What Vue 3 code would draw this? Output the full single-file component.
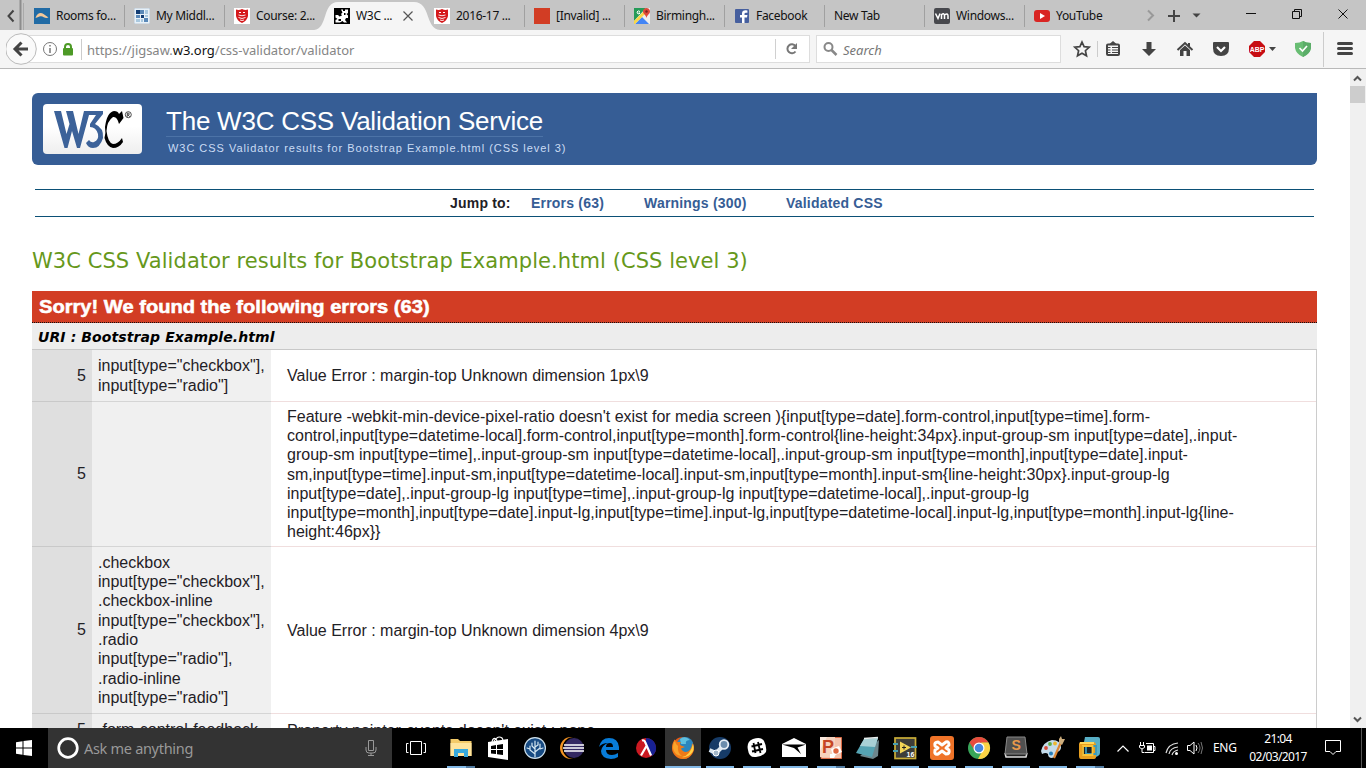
<script setup>
const tabs = [
  { t: 'Rooms fo...', i: 'rooms' }, { t: 'My Middl...', i: 'pixels' }, { t: 'Course: 2...', i: 'shield' },
  { t: 'W3C ...', i: 'w3c', active: true }, { t: '2016-17 ...', i: 'shield' }, { t: '[Invalid] ...', i: 'red' },
  { t: 'Birmingh...', i: 'maps' }, { t: 'Facebook', i: 'fb' }, { t: 'New Tab', i: '' },
  { t: 'Windows...', i: 'vm' }, { t: 'YouTube', i: 'yt' },
]
const rows = [
  { h: 52, sel: ['input[type="checkbox"],', 'input[type="radio"]'], msg: ['Value Error : margin-top Unknown dimension 1px\\9'] },
  { h: 145, sel: [], msg: [
    "Feature -webkit-min-device-pixel-ratio doesn't exist for media screen ){input[type=date].form-control,input[type=time].form-",
    'control,input[type=datetime-local].form-control,input[type=month].form-control{line-height:34px}.input-group-sm input[type=date],.input-',
    'group-sm input[type=time],.input-group-sm input[type=datetime-local],.input-group-sm input[type=month],input[type=date].input-',
    'sm,input[type=time].input-sm,input[type=datetime-local].input-sm,input[type=month].input-sm{line-height:30px}.input-group-lg',
    'input[type=date],.input-group-lg input[type=time],.input-group-lg input[type=datetime-local],.input-group-lg',
    'input[type=month],input[type=date].input-lg,input[type=time].input-lg,input[type=datetime-local].input-lg,input[type=month].input-lg{line-',
    'height:46px}}'] },
  { h: 167, sel: ['.checkbox', 'input[type="checkbox"],', '.checkbox-inline', 'input[type="checkbox"],', '.radio', 'input[type="radio"],', '.radio-inline', 'input[type="radio"]'], msg: ['Value Error : margin-top Unknown dimension 4px\\9'] },
  { h: 33, sel: ['.form-control-feedback'], msg: ["Property pointer-events doesn't exist : none"] },
]
const apps = [
  { i: 'folder', run: 'split' }, { i: 'store' }, { i: 'tree' }, { i: 'eclipse' }, { i: 'edge' }, { i: 'lambda' },
  { i: 'firefox', run: 'full' }, { i: 'steam', run: 'on' }, { i: 'slack', run: 'on' }, { i: 'mail', run: 'on' },
  { i: 'ppt', run: 'split' }, { i: 'note', run: 'on' }, { i: 'labview', run: 'on' }, { i: 'xampp', run: 'on' },
  { i: 'chrome', run: 'on' }, { i: 'sublime', run: 'on' }, { i: 'paint', run: 'on' }, { i: 'vmware', run: 'split' },
]
</script>

<template>
  <div class="screen">
    <header class="tabbar">
      <svg class="prev" width="24" height="30" viewBox="0 0 24 30"><path d="M13.500 10.500L8.500 16L13.500 21.500" fill="none" stroke="#444" stroke-width="2" /><path d="M20.500 0V30" stroke="#8d8d8d" stroke-width="2" /><path d="M23.500 3V30" stroke="#aaa" /></svg>
      <div v-for="(tab, n) in tabs" :key="n" class="tab" :class="{ active: tab.active, bare: !tab.i, sep: n !== 0 && n !== 3 && n !== 4 }">
        <svg v-if="tab.active" class="shape" width="126" height="30" viewBox="0 0 126 30"><path d="M0 30C14 29 8 2 24 2H100C117 2 111 29 126 30Z" fill="#f5f5f5" /></svg>
        <svg v-if="tab.i" class="fav" width="16" height="16" viewBox="0 0 16 16">
          <g v-if="tab.i === 'rooms'"><rect width="16" height="16" fill="#216ba5" /><path d="M1.500 10C3 4.500 7 4 9.500 6L14.500 9.500C11.500 11 9.500 8.500 7 8.200C5 8 4 9.500 1.500 10" fill="#f4c99a" /></g>
          <g v-else-if="tab.i === 'pixels'"><rect width="16" height="16" fill="#e8f1f8" stroke="#9ab" stroke-width=".6" /><path d="M2 2H6V6H2ZM7 7H10V10H7Z" fill="#123d74" /><path d="M6 2H10V6H6ZM2 7H6V10H2ZM10 10H14V14H10Z" fill="#5988b8" /><path d="M11 2H14V6H11ZM2 11H6V14H2ZM7 11H9V14H7ZM11 7H14V9H11Z" fill="#a9c8df" /></g>
          <g v-else-if="tab.i === 'shield'"><rect width="16" height="16" fill="#fff" /><path d="M2 1.500Q5 2.500 8 1Q11 2.500 14 1.500V8Q13 13 8 15Q3 13 2 8Z" fill="#d5191c" /><path d="M4.500 7Q8 8.500 11.500 7M4.500 9.500Q8 11.500 11.500 9.500M6 12Q8 13 10 12" fill="none" stroke="#fff" stroke-width=".9" /><path d="M5 4.500H7M9 4.500H11" stroke="#fff" /></g>
          <g v-else-if="tab.i === 'w3c'"><rect width="16" height="16" /><path d="M7 1.500H9V3H11V1.500H14V5L12.500 6L14 7.500V10H12L11 12L13 14.500H10L8.500 13L6 14.500H1.500V12L3.500 11L1.500 9.500V7H4L5.500 8.500L8 7.500L7 6L8.500 4.500Z" fill="#fff" /><path d="M4.500 11H7V13H4.500ZM10 5H11.500V7H10Z" /></g>
          <rect v-else-if="tab.i === 'red'" width="16" height="16" fill="#d23d24" />
          <g v-else-if="tab.i === 'maps'"><rect width="16" height="16" fill="#eee" /><path d="M0 0H12L0 13Z" fill="#259b58" /><path d="M1 16L8 9L15 16Z" fill="#4385f5" /><path d="M0 13L10 3L12 5L1 16H0Z" fill="#fad749" /><path d="M12.500 10C12 7 9 6 9 3.500C9 1 11 0 12.500 0S16 1 16 3.500C16 6 13 7 12.500 10" fill="#df493a" /><circle cx="12.500" cy="3.500" r="1.200" fill="#7c231e" /><path d="M6 3.500Q4 2 3 4Q3 6 5 6L6 5H4.500" stroke="#fff" fill="none" /></g>
          <g v-else-if="tab.i === 'fb'"><rect x="1" y="1" width="14" height="14" rx="1" fill="#465f9e" /><path d="M10.500 15V9.500H13L13.400 7H10.500V5.700Q10.500 4.700 12 4.700H13.400V2.500Q8 1.700 8 5.500V7H6V9.500H8V15" fill="#fff" /></g>
          <g v-else-if="tab.i === 'vm'"><rect width="16" height="16" rx="2" fill="#47484d" /><path d="M1.500 5.500L4 10.500L6 5.500M7.500 11V6M7.500 6.500Q10.500 4.500 10.500 8V11M10.500 7Q14 4.500 14 8V11" stroke="#fff" stroke-width="1.500" fill="none" /></g>
          <g v-else><rect y="2" width="16" height="12" rx="3" fill="#d92523" /><path d="M6 5L11 8L6 11Z" fill="#fff" /></g>
        </svg>
        <span>{{ tab.t }}</span>
        <svg v-if="tab.active" class="x" width="10" height="10" viewBox="0 0 10 10"><path d="M.5.5L9.500 9.500M9.500.5L.5 9.500" stroke="#555" stroke-width="1.200" /></svg>
      </div>
      <svg class="wincontrols" width="242" height="30" viewBox="1124 0 242 30">
        <path d="M1148 10.500L1153 15.500L1148 20.500" fill="none" stroke="#999" stroke-width="2" />
        <path d="M1174 10V22M1168 16H1180" stroke="#444" stroke-width="2" /><path d="M1192.500 13.500H1200.500L1196.500 17.500Z" fill="#444" />
        <path d="M1246 13.500H1256M1292.500 11.500H1299.500V18.500H1292.500ZM1294.500 11V9.500H1301.500V16.500H1300M1338.500 9.500L1347.500 18.500M1347.500 9.500L1338.500 18.500" fill="none" stroke="#111" />
      </svg>
    </header>

    <nav class="toolbar">
      <div class="address">
        <svg width="74" height="38" viewBox="6 30 74 38">
          <circle cx="21" cy="49" r="15.300" fill="#fafafa" stroke="#bbb" /><path d="M28 49H15.500M21.500 42.500L15 49L21.500 55.500" fill="none" stroke="#444" stroke-width="3" />
          <circle cx="50" cy="49" r="6.500" fill="none" stroke="#777" /><path d="M50 45V46.500M50 48V53" stroke="#777" stroke-width="1.500" />
          <rect x="63" y="48" width="10" height="7.500" rx="1" fill="#4d9a26" /><path d="M65 49V47Q65 44 68 44Q71 44 71 47V49" fill="none" stroke="#4d9a26" stroke-width="2" />
        </svg>
        <span class="url">https://jigsaw.<b>w3.org</b>/css-validator/validator</span>
        <svg class="reload" width="34" height="26" viewBox="775 37 34 26"><path d="M775.500 40V60" stroke="#d0d0d0" /><path d="M795.500 47A4.500 4.500 0 1 0 795.500 52.500" stroke="#777" stroke-width="2" fill="none" /><path d="M797 44V50H791Z" fill="#777" /></svg>
      </div>
      <div class="search">
        <svg width="16" height="16" viewBox="0 0 16 16"><circle cx="5.500" cy="6" r="4" fill="none" stroke="#888" stroke-width="2" /><path d="M8.500 9L13.500 14" stroke="#888" stroke-width="2.500" /></svg>
        <span>Search</span>
      </div>
      <svg class="tools" width="305" height="38" viewBox="1061 30 305 38">
        <path d="M1082 42L1084.100 46.700L1089.200 47.200L1085.400 50.700L1086.500 55.800L1082 53.200L1077.500 55.800L1078.600 50.700L1074.800 47.200L1079.900 46.700Z" fill="none" stroke="#444" stroke-width="1.700" />
        <path d="M1097.500 41V57M1323.500 32V67" stroke="#ccc" />
        <rect x="1107" y="44.500" width="12" height="10.500" rx="1" fill="#f5f5f5" stroke="#444" stroke-width="2" /><path d="M1109.500 44L1113 41L1116.500 44Z" fill="#444" /><path d="M1108 47.500H1110.500M1112 47.500H1118M1108 50H1110.500M1112 50H1118M1108 52.500H1110.500M1112 52.500H1118" stroke="#444" stroke-width="1" />
        <path d="M1146.500 42H1151.500V49H1156L1149 56L1142 49H1146.500Z" fill="#444" />
        <path d="M1177.500 50L1185 43L1192.500 50M1189 43V46" fill="none" stroke="#444" stroke-width="2" /><path d="M1180 50L1185 45.500L1190 50V56H1186.500V51H1183.500V56H1180Z" fill="#444" />
        <path d="M1213 43Q1213 42 1214 42H1228Q1229 42 1229 43V48Q1229 56 1221 56Q1213 56 1213 48Z" fill="#444" /><path d="M1217 47L1221 51L1225 47" fill="none" stroke="#fff" stroke-width="2.200" />
        <path d="M1254 41H1260L1265 46V52L1260 57H1254L1249 52V46Z" fill="#c70d13" /><text x="1249.700" y="52" textLength="14.600" lengthAdjust="spacingAndGlyphs" font-family="Liberation Sans" font-size="8" font-weight="bold" fill="#fff">ABP</text><path d="M1269 47H1276L1272.500 51Z" fill="#444" />
        <path d="M1295 43Q1300 43 1303 41Q1306 43 1311 43V48Q1310 54 1303 57Q1296 54 1295 48Z" fill="#68bd73" /><path d="M1303 41Q1306 43 1311 43V48Q1310 54 1303 57Z" fill="#5bad68" /><path d="M1299.500 48L1302.500 51L1307 46" fill="none" stroke="#fff" stroke-width="1.700" />
        <path d="M1338.500 43.500H1351.500M1338.500 48.500H1351.500M1338.500 53.500H1351.500" stroke="#444" stroke-width="3" stroke-linecap="round" />
      </svg>
    </nav>

    <div class="viewport">
      <main>
        <div class="banner">
          <div class="logo"><svg width="99" height="50" viewBox="0 0 99 50"><path d="M11 7H18L23.500 30L26.500 20L23 7H30L35.500 30L41 7H60V10L52 20Q61 24 60 34Q57 44 50 44Q45 44 43 39L46 36Q48 39 51 38Q56 36 55 30Q53 23 47 23V20L53 11H46L37 44H34L29 27L24.500 44H21.500Z" fill="#3c6299" /><path d="M79 7L80.500 14L76 20Q74 12 70 13Q64 17 63.500 27Q65 39 70 40Q75 40 79 34L80 38Q76 44 70 44Q64 43 61.500 34Q63 29 62 23Q64 8 71 7Q75 7 76 10Z" /><circle cx="85.300" cy="10.700" r="3" fill="none" stroke="#222" stroke-width=".8" /><path d="M84.300 12.700V9.200H85.800Q87.200 10 85.800 10.900H84.800L86.800 12.700" fill="none" stroke="#222" stroke-width=".8" /></svg></div>
          <div class="titles"><h1>The W3C CSS Validation Service</h1><p>W3C CSS Validator results for Bootstrap Example.html (CSS level 3)</p></div>
        </div>
        <div class="jump"><span class="jt">Jump to:</span><span class="je">Errors (63)</span><span class="jw">Warnings (300)</span><span class="jv">Validated CSS</span></div>
        <h2>W3C CSS Validator results for Bootstrap Example.html (CSS level 3)</h2>
        <h3><span>Sorry! We found the following errors (63)</span></h3>
        <h4>URI : Bootstrap Example.html</h4>
        <div class="table">
          <div v-for="(r, n) in rows" :key="n" class="row" :style="{ height: r.h + 'px' }">
            <div class="num">5</div>
            <div class="sel"><div v-for="(s, k) in r.sel" :key="k">{{ s }}</div></div>
            <div class="msg"><div v-for="(m, k) in r.msg" :key="k">{{ m }}</div></div>
          </div>
        </div>
      </main>
      <aside class="scroll"><svg width="16" height="659" viewBox="0 0 16 659"><rect y="17" width="15" height="17" fill="#cdcdcd" /><path d="M4 11.500L7.500 8L11 11.500M4 648.500L7.500 652L11 648.500" fill="none" stroke="#555" stroke-width="2" /></svg></aside>
    </div>

    <footer class="taskbar">
      <div class="start"><svg width="16" height="16" viewBox="0 0 16 16"><path d="M0 2.200L6.500 1.300V7.500H0ZM7.500 1.100L16 0V7.500H7.500ZM0 8.500H6.500V14.700L0 13.800ZM7.500 8.500H16V16L7.500 14.900Z" fill="#fff" /></svg></div>
      <div class="cortana">
        <svg width="22" height="22" viewBox="0 0 22 22"><circle cx="11" cy="11" r="9.300" fill="none" stroke="#fff" stroke-width="2.700" /></svg>
        <span>Ask me anything</span>
        <svg class="mic" width="12" height="16" viewBox="0 0 12 16"><path d="M3.500.5H8.500V10.500H3.500ZM1 7V10Q1 13 4 13H8Q11 13 11 10V7M6 13V15.500M3 15.500H9" fill="none" stroke="#999" /></svg>
      </div>
      <div class="task"><svg width="20" height="16" viewBox="0 0 20 16"><path d="M4.500 1.500H15.500V14.500H4.500ZM2.500 3.500H.5V12.500H2.500M17.500 3.500H19.500V12.500H17.500" fill="none" stroke="#fff" /></svg></div>
      <div class="apps">
        <div v-for="a in apps" :key="a.i" class="app" :class="a.run">
          <svg width="24" height="24" viewBox="0 0 24 24">
            <g v-if="a.i === 'folder'"><path d="M1.500 3H9L11 5H22.500V20H1.500Z" fill="#f3ca68" /><path d="M1.500 7H22.500V20H1.500Z" fill="#ffe49c" /><path d="M5 21V13H19V21H15V17H9V21Z" fill="#38a9dc" /></g>
            <g v-else-if="a.i === 'store'"><path d="M2 6L22 3V24L2 21Z" fill="#fff" /><path d="M6 6Q7 1 10 3L11 5M8 5Q12 -1 16 2L17 4" fill="none" stroke="#fff" stroke-width="1.200" /><path d="M5 10L10 9V13H5ZM11 9L17 8V13H11ZM5 14H10V18L5 17.500ZM11 14H17V19L11 18.200Z" /></g>
            <g v-else-if="a.i === 'tree'"><circle cx="12" cy="12" r="11" fill="#cfe2ee" /><circle cx="12" cy="12" r="9.800" fill="#174b83" /><path d="M12 21V5M12 18L7 14V10M7 13L4 12M12 13L9 10V7M12 16L17 12V8M17 13L20 12M12 11L15 9V6" fill="none" stroke="#d6e9f3" stroke-width="1.200" stroke-linecap="round" /></g>
            <g v-else-if="a.i === 'eclipse'"><circle cx="11" cy="12" r="11" fill="#f59524" /><circle cx="13.500" cy="12" r="11" fill="#000" /><circle cx="14" cy="12" r="10" fill="#332862" /><path d="M4 9H24M3 12H24M4 15H24" stroke="#fff" stroke-width="1.700" /></g>
            <path v-else-if="a.i === 'edge'" d="M2 11Q4 2 12 2Q21 2 22 11V14H9Q9 19 15 19Q18 19 21 17V21Q18 23 14 23Q4 22 4 15Q5 9 11 7Q5 7 2 11M9 11H16Q16 7 13 7Q9 7 9 11" fill="#087cd8" fill-rule="evenodd" />
            <g v-else-if="a.i === 'lambda'"><circle cx="12" cy="12" r="10" fill="#cb1921" /><path d="M12 2A10 10 0 0 1 18 20L12 8Z" fill="#172193" /><path d="M8 4.500Q10.500 3.500 11.500 7L17 19.500M12.500 10L7 19.500" fill="none" stroke="#fff" stroke-width="2.200" /></g>
            <g v-else-if="a.i === 'firefox'"><circle cx="12" cy="12" r="11" fill="#e55b16" /><circle cx="14" cy="9.500" r="8.500" fill="#2a86be" /><path d="M9 3Q14 -1 19 4Q14 4 15 8L10 8Z" fill="#5ec0df" /><path d="M1 12Q1 7 3.500 3.500L6 6L10 6Q8 8 10 9.500L14 11L10 12.500Q12 17 17 15.500Q21 13 21 7Q24 11 22 16Q18 24 11 23Q2 21 1 12" fill="#ee7a18" /><path d="M22 8Q24 14 20 18Q16 22 11 21Q19 20 22 8" fill="#ffd247" /><path d="M2 12Q2 7 4 5L5 8L7 10Q6 17 11 20Q3 19 2 12" fill="#f9a52c" /></g>
            <g v-else-if="a.i === 'steam'"><circle cx="12" cy="12" r="11" fill="#163b67" /><path d="M1.500 14L8 17L15 10" fill="none" stroke="#dbe6ef" stroke-width="4" /><circle cx="16" cy="8.500" r="4.300" fill="#6b8dad" stroke="#e6eef5" stroke-width="1.800" /><circle cx="8" cy="17" r="3" fill="#a1b6c9" stroke="#fff" /></g>
            <g v-else-if="a.i === 'slack'"><path d="M8 3Q16 0 19 5Q22 11 21 16Q17 21 11 21Q4 22 3 14Q1 6 8 3Z" fill="#fff" /><path d="M8.500 7L10.500 17M13 6L15.500 17M6.500 10.500L17 8M7 15.500L18 13" stroke="#000" stroke-width="1.800" /></g>
            <g v-else-if="a.i === 'mail'"><path d="M0 8L12 2L24 8V21H0Z" fill="#fff" /><path d="M0 8.500L12 12L19 18L15.500 11.500L24 8.500Z" /></g>
            <g v-else-if="a.i === 'ppt'"><path d="M10 1.500H22.500V22.500H2V16Z" fill="#f5c3ad" stroke="#d96a45" /><rect x="1" y="1" width="15" height="20" fill="#f6d2bd" /><path d="M1 1H8L1 15Z" fill="#fff" opacity=".5" /><text x="3" y="17" font-family="Liberation Sans" font-size="18" font-weight="bold" fill="#c64524">P</text><path d="M12 13L20 10L23 16L14 20Z" fill="#fff" /><circle cx="17" cy="15" r="2.700" fill="#df6640" /><path d="M11 18H17L15 22H11Z" fill="#fff" /></g>
            <g v-else-if="a.i === 'note'"><path d="M4 20L17 23L22 20L23 4Z" fill="#6d868c" /><path d="M0 17L8 3L22 2L16 21Z" fill="#55a3b2" /><path d="M8 3L22 2L19 11L4 10Z" fill="#a9d0d5" /><path d="M8 2.500L22 1.500" stroke="#e8eeee" stroke-width="1.500" /></g>
            <g v-else-if="a.i === 'labview'"><rect x="2" y="2" width="20.500" height="20.500" fill="#3d3d39" stroke="#cbae38" stroke-width="1.700" /><path d="M0 8H5M0 15H5M18 11H24" stroke="#489fb0" stroke-width="2" /><path d="M7 5.500V17.500L18 11.500Z" fill="#f4d657" /><path d="M9 11.500H13M11 9.500V13.500" stroke="#222" /><text x="13.500" y="21" font-family="Liberation Sans" font-size="7" font-weight="bold" fill="#fff">16</text></g>
            <g v-else-if="a.i === 'xampp'"><rect x="0" y="0" width="24" height="24" rx="3" fill="#ef7328" /><path d="M8 6Q4 6 5 10L8 12L5 14Q4 19 8 18L12 15L16 18Q20 18 19 14L16 12L19 9Q19 5 16 6L12 9Z" fill="none" stroke="#fff" stroke-width="3" stroke-linejoin="round" /></g>
            <g v-else-if="a.i === 'chrome'"><circle cx="12" cy="12" r="11" fill="#38a559" /><path d="M2.500 6.500A11 11 0 0 1 21.500 6.500L12 7L8 15Z" fill="#e84b3c" /><path d="M21.500 6.500A11 11 0 0 1 11 23L17 12L14 6.500Z" fill="#fbd345" /><circle cx="12" cy="12" r="5.500" fill="#fff" /><circle cx="12" cy="12" r="4.300" fill="#4787df" /></g>
            <g v-else-if="a.i === 'sublime'"><path d="M1 17L2 21H22L23 17" fill="#222" stroke="#ddd" stroke-width="1.500" /><path d="M3 1H21L23 18H1Z" fill="#505050" stroke="#888" /><text x="7.500" y="13.500" font-family="Liberation Sans" font-size="14" font-weight="bold" fill="#e99a4b">S</text></g>
            <g v-else-if="a.i === 'paint'"><path d="M0 15Q2 6 11 4Q20 4 20 12Q19 16 15 16Q16 20 11 22Q7 22 7 18Q5 16 1 18Z" fill="#c5dcea" /><circle cx="5" cy="12" r="1.900" fill="#d94c38" /><circle cx="9" cy="8" r="1.900" fill="#5cac45" /><circle cx="14" cy="7.500" r="1.900" fill="#eeb72d" /><circle cx="10" cy="17.500" r="2" fill="#287db7" /><path d="M20.500 5L13 22" stroke="#dd8431" stroke-width="2.200" /><path d="M18 3L20 0L21 3L24 3L21 9L18 7Z" fill="#cdad7d" /></g>
            <g v-else><path d="M7 1H20Q22 1 22 3V17Q22 19 20 20L16 22L6 6Z" fill="#58afc6" /><path d="M3 6H15Q18 6 18 9V21Q18 23 15 23H3Q1 23 1 20V8Q1 6 3 6Z" fill="#e79f20" /><path d="M2 7H16" stroke="#ffd75a" stroke-width="2" /><rect x="4" y="10" width="11" height="9.500" fill="#17232a" /><path d="M8 10H18V18H8Z" fill="none" stroke="#3a9bbb" stroke-width="1.800" /><path d="M5 10H14.500V19H5Z" fill="none" stroke="#f9c438" stroke-width="1.800" /></g>
          </svg>
        </div>
      </div>
      <svg class="tray" width="98" height="40" viewBox="1109 728 98 40"><path d="M1117.500 751.500L1123 746L1128.500 751.500" fill="none" stroke="#fff" stroke-width="1.200" /><path d="M1146 743.500H1153.500V752.500H1144.500M1154 746.500H1155V750.500H1154M1140.500 742V745M1143.500 742V745M1139.500 745.500H1144.500V747.500L1142 749L1139.500 747.500V745.500M1142 749V752.500H1144" fill="none" stroke="#fff" /><rect x="1147" y="745.500" width="5" height="5" fill="#fff" /><path d="M1166 753Q1168 744 1178 743M1169 754Q1170 748 1178 747M1172 755Q1173 751 1178 750" fill="none" stroke="#ddd" stroke-width="1.200" /><circle cx="1176.500" cy="753.500" r="1.500" fill="#fff" /><path d="M1187.500 745.500H1190L1194 742V754L1190 750.500H1187.500Z" fill="none" stroke="#fff" /><path d="M1196 745Q1198 748 1196 751" stroke="#fff" fill="none" /><path d="M1198 743Q1202 748 1198 753M1201 742Q1204 748 1201 754" stroke="#777" fill="none" /></svg>
      <span class="lang">ENG</span>
      <div class="clock"><span>21:04</span><span>02/03/2017</span></div>
      <svg class="action" width="47" height="40" viewBox="1319 728 47 40"><path d="M1325.500 740.500H1340.500V751.500H1336L1333 754.500L1330 751.500H1325.500Z" fill="none" stroke="#fff" /><path d="M1361.500 728V768" stroke="#555" /></svg>
    </footer>
  </div>
</template>

<style>
body { margin: 0; overflow: hidden; }
</style>
<style scoped>
* { box-sizing: border-box; }
.screen { width: 1366px; height: 768px; overflow: hidden; display: flex; flex-direction: column; background: #fff; font-family: "Liberation Sans", Arial, sans-serif; white-space: nowrap; }
svg { display: block; flex: none; }
.tabbar { height: 30px; flex: none; display: flex; background: #c5c5c5; }
.tab { width: 100px; height: 30px; flex: none; display: flex; align-items: center; padding: 2px 0 0 10px; position: relative; font: 12px/18px "Noto Sans", sans-serif; color: #111; letter-spacing: -.3px; }
.tab.sep::before { content: ""; position: absolute; left: 0; top: 5px; width: 1px; height: 22px; background: #a0a0a0; }
.tab span { margin-left: 6px; position: relative; }
.fav { position: relative; }
.tab.bare span { margin-left: 0; }
.shape { position: absolute; left: -10px; top: 0; }
.x { position: absolute; left: 79px; top: 11px; }
.toolbar { height: 39px; flex: none; display: flex; align-items: flex-start; background: #f5f5f5; border-bottom: 1px solid #b9b9b9; }
.address { height: 38px; width: 810px; padding-left: 6px; display: flex; align-items: center; background: linear-gradient(#fff, #fff) 21px 6px / 788px 26px no-repeat, linear-gradient(#ddd, #ddd) 21px 5px / 789px 28px no-repeat; }
.url { border-left: 1px solid #ccc; padding: 1px 0 0 5px; margin-left: 1px; font: 13px/20px "Noto Sans", sans-serif; letter-spacing: -.03px; color: #858585; }
.url b { font-weight: 400; color: #111; }
.reload { margin-left: auto; margin-right: 1px; }
.search { width: 245px; height: 28px; margin: 5px 0 0 6px; border: 1px solid #ddd; background: #fff; display: flex; align-items: center; padding: 2px 0 0 6px; font: italic 13px/20px "Noto Sans", sans-serif; color: #777; }
.search svg { margin-top: -2px; }
.search span { margin-left: 4px; }
.viewport { height: 659px; flex: none; display: flex; }
main { width: 1350px; height: 659px; overflow: hidden; padding: 24px 33px 0 32px; }
.scroll { width: 16px; background: #f0f0f0; }
.banner { height: 72px; background: #365d95; border-radius: 6px 0 6px 6px; display: flex; padding: 11px; }
.logo { width: 99px; height: 50px; background: linear-gradient(#fff 45%, #eee); border-radius: 4px; }
.titles { margin-left: 24px; }
h1 { margin: 0; width: 377px; height: 33px; font-size: 26px; line-height: 34px; font-weight: 400; letter-spacing: -.23px; color: #fff; border-bottom: 1px solid #4c73a7; }
.titles p { margin: 3px 0 0 2px; font-size: 11px; line-height: 16px; letter-spacing: .965px; color: #cbdcf4; }
.jump { height: 28px; margin: 24px 3px 0; border-top: 1px solid #0b5076; border-bottom: 1px solid #0b5076; padding-left: 415px; display: flex; align-items: center; font-size: 14px; font-weight: 700; letter-spacing: .2px; color: #365d95; }
.jt { width: 81px; color: #1f2126; }
.je { width: 113px; }
.jw { width: 142px; }
h2 { margin: 30px 0 0; height: 44px; font: 400 21px/28px "DejaVu Sans", sans-serif; letter-spacing: .065px; color: #66981b; }
h3 { margin: 0; height: 32px; background: #d23d24; border-bottom: 1px dotted #111; padding-left: 7px; font: 700 18px/32px "Liberation Sans", sans-serif; color: #fff; -webkit-text-stroke: .5px #fff; }
h3 span { display: inline-block; transform: scaleX(1.117); transform-origin: left; }
h4 { margin: 0; height: 27px; background: #ededed; border-bottom: 1px solid #c8c8c8; padding-left: 6px; font: italic 700 14px/28px "DejaVu Sans", sans-serif; letter-spacing: .1px; color: #000; }
.table { border-right: 1px solid #ccc; font-size: 16px; line-height: 19.300px; color: #1f2126; }
.row { display: flex; }
.num { width: 60px; background: #dfdfdf; border-bottom: 1px solid #c9c9c9; display: flex; align-items: center; justify-content: flex-end; padding-right: 6px; }
.sel { width: 179px; background: #f0f0f0; border-bottom: 1px solid #d5d5d5; padding-left: 6px; display: flex; flex-direction: column; justify-content: center; }
.msg { flex: 1; border-bottom: 1px solid #f0dede; padding: .5px 0 0 16px; display: flex; flex-direction: column; justify-content: center; }
.taskbar { height: 40px; flex: none; background: #000; display: flex; align-items: center; color: #fff; }
.start { width: 48px; padding-left: 16px; }
.cortana { width: 344px; height: 40px; background: #333; display: flex; align-items: center; padding-left: 9px; font: 14.500px/20px "Noto Sans", sans-serif; letter-spacing: -.3px; color: #999; }
.cortana span { margin-left: 5px; }
.mic { margin-left: auto; margin-right: 15px; }
.task { width: 50px; padding-left: 14px; }
.apps { display: flex; }
.app { width: 37px; height: 40px; display: flex; align-items: center; justify-content: center; background: linear-gradient(#82b8e5, #82b8e5) 5px bottom / 0 2px no-repeat; }
.app.on { background-size: 28px 2px; }
.app.split { background: linear-gradient(90deg, #82b8e5 19px, #527ba0 19px) 5px bottom / 28px 2px no-repeat; }
.app.full { background: linear-gradient(#82b8e5, #82b8e5) 1px bottom / 36px 2px no-repeat, linear-gradient(#333, #333) 1px top / 36px 40px no-repeat; }
.tray { margin-left: 1px; }
.lang { width: 30px; margin-left: 6px; font: 12px/18px "Noto Sans", sans-serif; letter-spacing: -.3px; }
.clock { width: 70px; display: flex; flex-direction: column; align-items: center; font: 12px/18px "Noto Sans", sans-serif; letter-spacing: -.65px; }
.action { margin-left: auto; }
</style>
